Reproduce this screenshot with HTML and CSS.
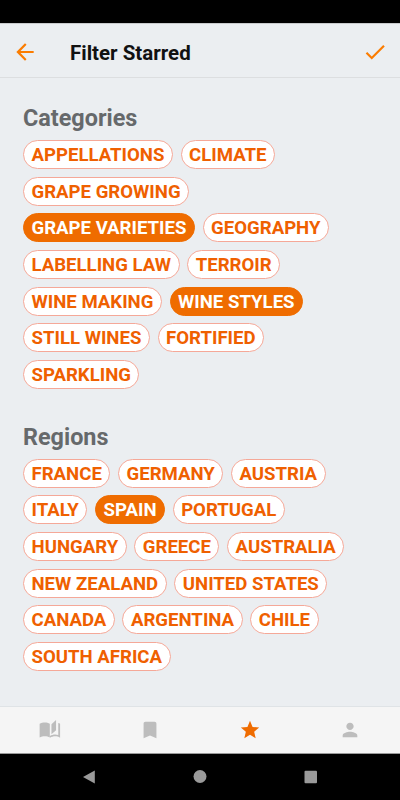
FILE: index.html
```html
<!DOCTYPE html>
<html lang="en">

<head>
    <meta charset="UTF-8">
    <meta name="viewport" content="width=device-width, initial-scale=1.0">
    <title>Filter Starred</title>
    <link rel="stylesheet" href="styles.css">
</head>

<body>

    <div class="status-bar"></div>

    <header class="header">
        <svg class="back" viewBox="0 0 24 24"><path d="M20 11H7.830l5.590-5.590L12 4l-8 8 8 8 1.410-1.410L7.830 13H20v-2z" /></svg>
        <h1>Filter Starred</h1>
        <svg class="done" viewBox="0 0 24 24"><path d="M9 16.170L4.830 12l-1.420 1.410L9 19 21 7l-1.410-1.410z" /></svg>
    </header>

    <main class="content">
        <section class="group">
            <h2>Categories</h2>
            <div class="chips">
                <span class="chip">APPELLATIONS</span>
                <span class="chip">CLIMATE</span>
                <span class="chip">GRAPE GROWING</span>
                <span class="chip selected">GRAPE VARIETIES</span>
                <span class="chip">GEOGRAPHY</span>
                <span class="chip">LABELLING LAW</span>
                <span class="chip">TERROIR</span>
                <span class="chip">WINE MAKING</span>
                <span class="chip selected">WINE STYLES</span>
                <span class="chip">STILL WINES</span>
                <span class="chip">FORTIFIED</span>
                <span class="chip">SPARKLING</span>
            </div>
        </section>

        <section class="group">
            <h2>Regions</h2>
            <div class="chips">
                <span class="chip">FRANCE</span>
                <span class="chip">GERMANY</span>
                <span class="chip">AUSTRIA</span>
                <span class="chip">ITALY</span>
                <span class="chip selected">SPAIN</span>
                <span class="chip">PORTUGAL</span>
                <span class="chip">HUNGARY</span>
                <span class="chip">GREECE</span>
                <span class="chip">AUSTRALIA</span>
                <span class="chip">NEW ZEALAND</span>
                <span class="chip">UNITED STATES</span>
                <span class="chip">CANADA</span>
                <span class="chip">ARGENTINA</span>
                <span class="chip">CHILE</span>
                <span class="chip">SOUTH AFRICA</span>
            </div>
        </section>
    </main>

    <nav class="tabs">
        <div class="tab">
            <svg viewBox="0 0 24 24"><path d="M18.600 1.200l-5 4.500v11l5-4.500zM.7 5.300v14.800c1.500-1 3.600-1.400 5.600-1.400 1.900 0 4 .4 5.500 1.500V5.300C10.300 4.200 8.200 3.800 6.300 3.800S2.100 4.200.7 5.300zM23 20.400V5.300c-.6-.5-1.200-.8-2-1v13.200c-1.100-.3-2.300-.5-3.500-.5-1.700 0-4.100.7-5.500 1.500v1.900c1.400-.8 3.800-1.500 5.500-1.500 1.900 0 3.800.4 5.500 1.500z" /></svg>
        </div>
        <div class="tab">
            <svg viewBox="0 0 24 24"><path d="M17 3H7c-1.100 0-1.990.900-1.990 2L5 21l7-3 7 3V5c0-1.100-.900-2-2-2z" /></svg>
        </div>
        <div class="tab active">
            <svg viewBox="0 0 24 24"><path d="M12 17.270L18.180 21l-1.640-7.030L22 9.240l-7.190-.610L12 2 9.190 8.630 2 9.240l5.460 4.730L5.820 21z" /></svg>
        </div>
        <div class="tab">
            <svg viewBox="0 0 24 24"><path d="M12 12c2.210 0 4-1.790 4-4s-1.790-4-4-4-4 1.790-4 4 1.790 4 4 4zm0 2c-2.670 0-8 1.340-8 4v2h16v-2c0-2.660-5.330-4-8-4z" /></svg>
        </div>
    </nav>

    <div class="system-nav">
        <svg viewBox="0 0 14 14"><path d="M12.800.5v13L1 7z" /></svg>
        <svg viewBox="0 0 14 14"><circle cx="7" cy="6.500" r="6.500" /></svg>
        <svg viewBox="0 0 14 14"><rect x=".5" y=".7" width="12.500" height="12.500" rx="1" /></svg>
    </div>

</body>

</html>
```
FILE: styles.css
```css
* {
    margin: 0;
    padding: 0;
    box-sizing: border-box;
}

body {
    width: 400px;
    height: 800px;
    display: flex;
    flex-direction: column;
    overflow: hidden;
    font-family: Roboto, sans-serif;
    background: #ebeef1;
}

.status-bar {
    height: 23px;
    background: #000;
}

.header {
    height: 55px;
    display: flex;
    align-items: center;
    padding: 2px 12px 0 12px;
    border-top: 1px solid #c8cacc;
    border-bottom: 1px solid #dcdee0;
}

.header svg {
    width: 26px;
    height: 26px;
    fill: #fb7c00;
}

.header h1 {
    flex: 1;
    margin-top: 3px;
    margin-left: 32px;
    font-size: 20.5px;
    font-weight: 700;
    color: #111;
}

.content {
    flex: 1;
    padding: 25px 40px 0 23px;
}

.group {
    margin-bottom: 33px;
}

.group h2 {
    height: 37px;
    line-height: 31px;
    font-size: 23.4px;
    font-weight: 700;
    color: #66696b;
}

.chips {
    display: flex;
    flex-wrap: wrap;
    gap: 7.65px;
}

.chip {
    height: 29px;
    padding: 0 7.5px;
    line-height: 28px;
    border: 1px solid #f5a898;
    border-radius: 15px;
    font-size: 18.6px;
    font-weight: 700;
    color: #ef6000;
    background: #fff;
}

.chip.selected {
    color: #fff;
    background: #ef6c00;
    border-color: #ef6c00;
}

.tabs {
    height: 48px;
    display: flex;
    background: #f5f5f5;
    border-top: 1px solid #dfe3e6;
    border-bottom: 1px solid #999;
}

.tab {
    flex: 1;
    display: flex;
    justify-content: center;
    align-items: center;
}

.tab svg {
    width: 22px;
    height: 22px;
    fill: #bdbdbd;
}

.tab.active svg {
    fill: #ef6c00;
}

.system-nav {
    height: 46px;
    display: flex;
    justify-content: center;
    align-items: center;
    gap: 97px;
    background: #000;
}

.system-nav svg {
    width: 14px;
    height: 14px;
    fill: #9a9a9a;
}
```
